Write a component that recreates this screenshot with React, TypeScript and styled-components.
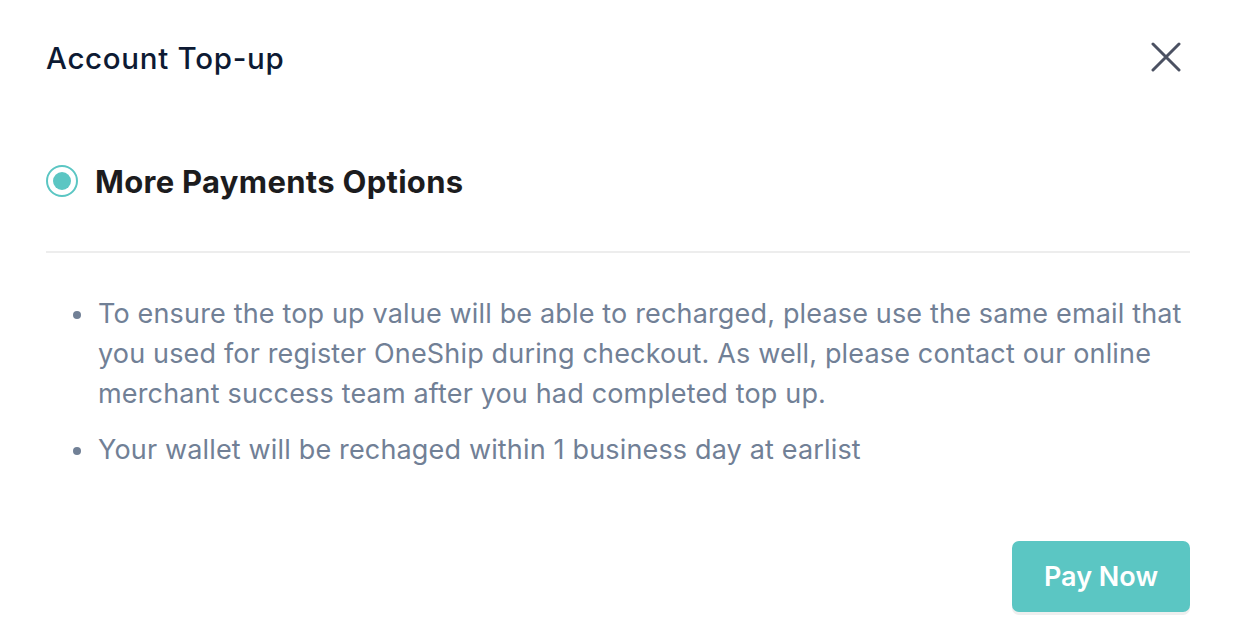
import React from 'react';
import styled, { createGlobalStyle } from 'styled-components';

const GlobalStyle = createGlobalStyle`
  html, body {
    margin: 0;
    padding: 0;
    background: #ffffff;
  }
  body {
    font-family: Inter, "Noto Sans", sans-serif;
  }
`;

const Modal = styled.div`
  width: 1234px;
  height: 642px;
  box-sizing: border-box;
  background: #ffffff;
  padding: 0 44px 0 46px;
  display: flex;
  flex-direction: column;
`;

const Header = styled.div`
  display: flex;
  align-items: center;
  justify-content: space-between;
  height: 116px;
`;

const Title = styled.h2`
  margin: 0;
  font-size: 29.5px;
  font-weight: 500;
  color: #0d1a33;
  letter-spacing: 0.7px;
`;

const CloseButton = styled.button`
  background: none;
  border: none;
  padding: 0;
  margin-right: 8px;
  margin-top: -2px;
  width: 32px;
  height: 32px;
  display: flex;
  align-items: center;
  justify-content: center;
  cursor: pointer;
`;

const OptionRow = styled.label`
  display: flex;
  align-items: center;
  gap: 17px;
  height: 137px;
  border-bottom: 2px solid #ededed;
  box-sizing: border-box;
  cursor: pointer;
`;

const Radio = styled.span<{ checked?: boolean }>`
  width: 32px;
  height: 32px;
  box-sizing: border-box;
  border-radius: 50%;
  border: 2px solid #5bc6c3;
  display: flex;
  align-items: center;
  justify-content: center;
  margin-top: -5px;

  &::after {
    content: '';
    width: 18px;
    height: 18px;
    border-radius: 50%;
    background: ${p => (p.checked ? '#5bc6c3' : 'transparent')};
  }
`;

const OptionLabel = styled.span`
  font-size: 31px;
  font-weight: 700;
  color: #1c1c1e;
  letter-spacing: 0.3px;
  margin-top: -5px;
`;

const Notes = styled.ul`
  margin: 0;
  padding: 41px 0 0 52px;
  list-style: none;
  display: flex;
  flex-direction: column;
  gap: 16px;
  flex: 1;
`;

const Note = styled.li`
  position: relative;
  font-size: 27px;
  line-height: 40px;
  letter-spacing: 0.16px;
  color: #718096;

  &::before {
    content: '';
    position: absolute;
    left: -25px;
    top: 17px;
    width: 8px;
    height: 8px;
    border-radius: 50%;
    background: #718096;
  }
`;

const Footer = styled.div`
  display: flex;
  justify-content: flex-end;
  padding-bottom: 30px;
`;

const PayButton = styled.button`
  width: 178px;
  height: 71px;
  border: none;
  border-radius: 7px;
  background: #5bc6c3;
  color: #ffffff;
  font-family: Inter, "Noto Sans", sans-serif;
  font-size: 27px;
  font-weight: 600;
  box-shadow: 0 3px 0 #efefef;
  cursor: pointer;
`;

const App: React.FC = () => {
  return (
    <>
      <GlobalStyle />
      <Modal>
        <Header>
          <Title>Account Top-up</Title>
          <CloseButton aria-label="Close">
            <svg width="30" height="30" viewBox="0 0 30 30" fill="none">
              <path d="M2 2L28 28M28 2L2 28" stroke="#4b5162" strokeWidth="3" strokeLinecap="round" />
            </svg>
          </CloseButton>
        </Header>

        <OptionRow>
          <Radio checked />
          <OptionLabel>More Payments Options</OptionLabel>
        </OptionRow>

        <Notes>
          <Note>
            To ensure the top up value will be able to recharged, please use the same email that
            you used for register OneShip during checkout. As well, please contact our online
            merchant success team after you had completed top up.
          </Note>
          <Note>Your wallet will be rechaged within 1 business day at earlist</Note>
        </Notes>

        <Footer>
          <PayButton>Pay Now</PayButton>
        </Footer>
      </Modal>
    </>
  );
};

export default App;
